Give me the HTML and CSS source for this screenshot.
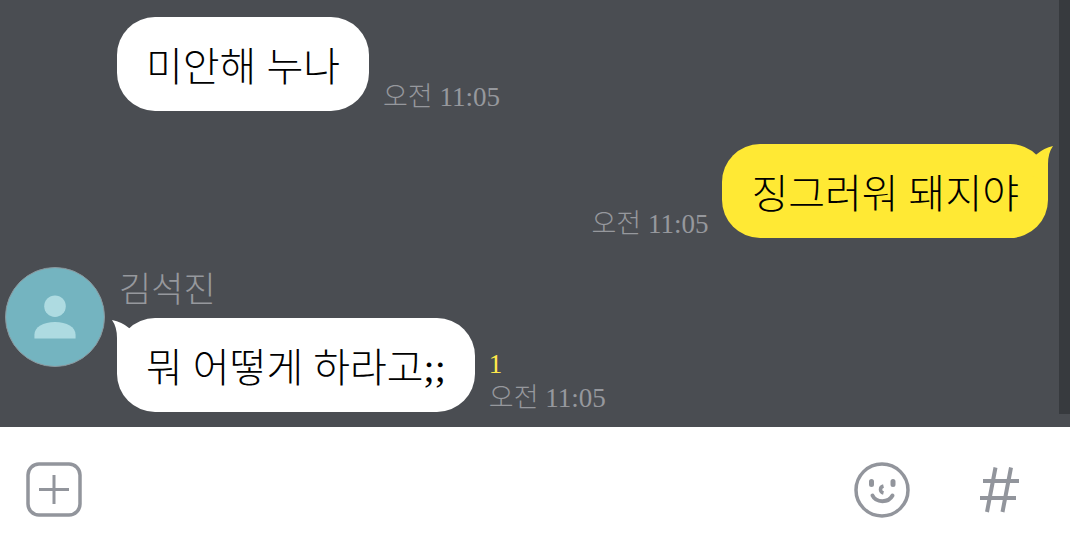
FILE: index.html
```html
<!DOCTYPE html>
<html lang="ko">
<head>
  <meta charset="UTF-8">
  <meta name="viewport" content="width=device-width, initial-scale=1">
  <title>김석진</title>
  <link rel="stylesheet" href="styles.css">
</head>
<body>

  <main class="chat">
    <div class="messages">
      <!-- Received, continues the previous sender -->
      <div class="message">
        <div class="row">
          <div class="bubble">미안해 누나</div>
          <div class="meta"><time>오전 11:05</time></div>
        </div>
      </div>

      <!-- Sent -->
      <div class="message mine">
        <div class="row">
          <div class="meta"><time>오전 11:05</time></div>
          <div class="bubble">
            징그러워 돼지야
            <svg class="tail" viewBox="0 0 22 36" aria-hidden="true">
              <path d="M0 12 L5 8 Q12 2 21 0 Q16 7 16 18 L16 36 L0 30 Z" fill="#ffe934"/>
            </svg>
          </div>
        </div>
      </div>

      <!-- Received, with avatar -->
      <div class="message with-avatar">
        <div class="avatar">
          <svg viewBox="0 0 100 100" aria-hidden="true">
            <circle cx="50" cy="39" r="11"/>
            <path d="M29 72 V68 C29 60 38 55 50 55 S71 60 71 68 V72 Z"/>
          </svg>
        </div>
        <div class="content">
          <div class="name">김석진</div>
          <div class="row">
            <div class="bubble">
              뭐 어떻게 하라고;;
              <svg class="tail" viewBox="0 0 22 36" aria-hidden="true">
                <path d="M22 12 L17 8 Q10 2 0 0 Q5 7 5 18 L5 36 L22 30 Z" fill="#fff"/>
              </svg>
            </div>
            <div class="meta">
              <span class="unread">1</span>
              <time>오전 11:05</time>
            </div>
          </div>
        </div>
      </div>
    </div>
    <div class="scroll-thumb"></div>
  </main>

  <form class="composer">
    <button type="button" aria-label="추가">
      <svg viewBox="0 0 56 56">
        <rect x="2" y="2" width="52" height="51" rx="11" stroke-width="3.5"/>
        <path d="M28 13 V42 M13 27.500 H43" stroke-width="3"/>
      </svg>
    </button>
    <input type="text" aria-label="메시지">
    <button type="button" aria-label="이모티콘">
      <svg viewBox="0 0 56 56">
        <circle cx="28" cy="28" r="26" stroke-width="3.5"/>
        <path d="M17.500 19.500 V22.500 M39 19.500 V22.500" stroke-width="5" stroke-linecap="round"/>
        <path d="M29.500 24 C25.500 25 25.500 30 29.500 31" stroke-width="3.500"/>
        <path d="M18.500 33.500 C22 41 34.500 41 38.500 33.500" stroke-width="4" stroke-linecap="round"/>
      </svg>
    </button>
    <button type="button" aria-label="샵검색">
      <svg viewBox="0 0 56 56">
        <path d="M24.500 5.500 L16 50 M40 5.500 L31.500 50 M12 19 H48 M9 36 H45" stroke-width="4"/>
      </svg>
    </button>
  </form>

</body>
</html>
```

FILE: styles.css
```css
* {
  box-sizing: border-box;
}

body {
  display: flex;
  flex-direction: column;
  min-height: 100vh;
  margin: 0;
  background: #fff;
  font-family: "Liberation Serif", "Noto Sans CJK KR", serif;
  font-weight: 300;
}

.chat {
  display: flex;
  flex: 1;
  background: #4a4d52;
}

.messages {
  display: flex;
  flex: 1;
  flex-direction: column;
  gap: 33px;
  padding: 17px 11px 15px 5px;
}

.scroll-thumb {
  width: 11px;
  margin-bottom: 13px;
  background: #373a3e;
}

.message {
  padding-left: 112px;
}

.with-avatar {
  display: flex;
  gap: 12px;
  padding-left: 0;
  margin-top: -4px;
}

.row {
  display: flex;
  align-items: flex-end;
  gap: 14px;
}

.mine .row {
  justify-content: flex-end;
}

.bubble {
  position: relative;
  padding: 31px 29px 23px;
  border-radius: 38px;
  background: #fff;
  color: #000;
  font-size: 40px;
  line-height: 40px;
  white-space: nowrap;
}

.mine .bubble {
  background: #ffe934;
}

.tail {
  position: absolute;
  top: 2px;
  left: -5px;
  width: 22px;
  height: 36px;
}

.mine .tail {
  right: -6px;
  left: auto;
}

.meta {
  display: flex;
  flex-direction: column;
  gap: 6px;
  color: #96989d;
  font-size: 27px;
  line-height: 28px;
  white-space: nowrap;
}

.unread {
  color: #ffe94a;
}

.avatar {
  flex: none;
  width: 100px;
  height: 100px;
  border: 1px solid #8b989e;
  border-radius: 50%;
  background: #74b4c0;
}

.avatar svg {
  display: block;
  fill: #aedbe1;
}

.name {
  height: 51px;
  padding-left: 2px;
  color: #96989d;
  font-size: 35px;
  line-height: 48px;
}

.composer {
  display: flex;
  align-items: center;
  padding: 35px 43px 27px 26px;
  background: #fff;
}

.composer button {
  width: 56px;
  height: 56px;
  padding: 0;
  border: 0;
  background: none;
  cursor: pointer;
}

.composer button:last-child {
  margin-left: 61px;
}

.composer svg {
  display: block;
  fill: none;
  stroke: #92959c;
}

.composer input {
  flex: 1;
  min-width: 0;
  height: 56px;
  padding: 0 24px;
  border: 0;
  outline: 0;
  background: none;
  font: inherit;
  font-size: 35px;
}
```
